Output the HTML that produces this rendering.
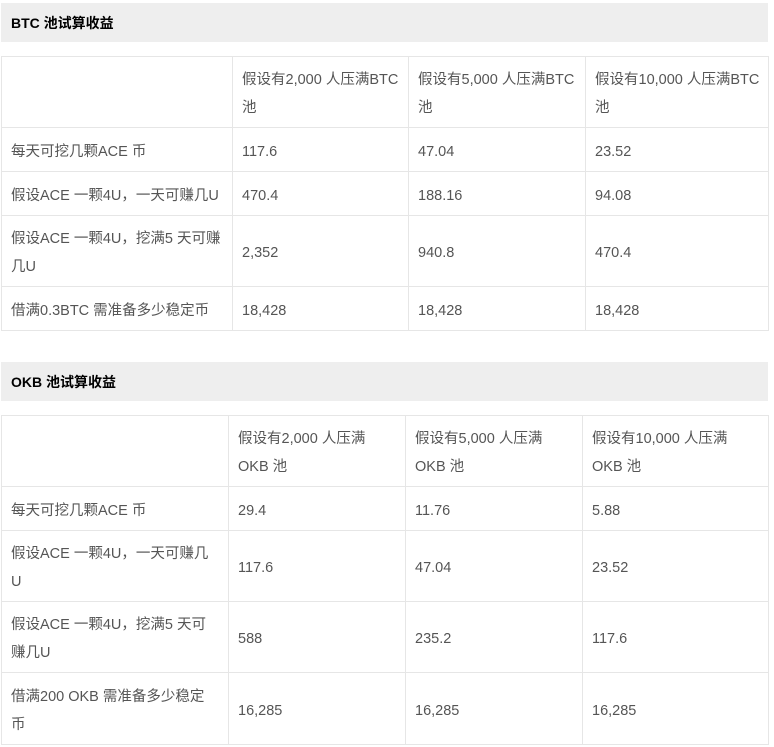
<!DOCTYPE html>
<html><head><meta charset="utf-8"><style>
body{margin:0;background:#fff;font-family:"Liberation Sans","Noto Sans CJK SC",sans-serif;}
.h{position:absolute;left:1px;width:767px;height:39px;background:#eeeeee;font-weight:bold;font-size:14px;color:#000;line-height:41px;padding-left:10px;box-sizing:border-box;}
table{position:absolute;left:1px;border-collapse:collapse;table-layout:fixed;font-size:14.5px;color:#555;}
td{border:1px solid #e6e6e6;padding:4px 9px 0;line-height:28px;vertical-align:middle;white-space:nowrap;overflow:hidden;}
</style></head><body>
<div class="h" style="top:3px">BTC 池试算收益</div>
<table style="top:56px;width:767px">
<colgroup><col style="width:231px"><col style="width:176px"><col style="width:177px"><col style="width:183px"></colgroup>
<tr style="height:71px"><td></td><td>假设有2,000 人压满BTC<br>池</td><td>假设有5,000 人压满BTC<br>池</td><td>假设有10,000 人压满BTC<br>池</td></tr>
<tr style="height:44px"><td>每天可挖几颗ACE 币</td><td>117.6</td><td>47.04</td><td>23.52</td></tr>
<tr style="height:44px"><td>假设ACE 一颗4U，一天可赚几U</td><td>470.4</td><td>188.16</td><td>94.08</td></tr>
<tr style="height:71px"><td>假设ACE 一颗4U，挖满5 天可赚<br>几U</td><td>2,352</td><td>940.8</td><td>470.4</td></tr>
<tr style="height:44px"><td>借满0.3BTC 需准备多少稳定币</td><td>18,428</td><td>18,428</td><td>18,428</td></tr>
</table>
<div class="h" style="top:362px">OKB 池试算收益</div>
<table style="top:415px;width:767px">
<colgroup><col style="width:227px"><col style="width:177px"><col style="width:177px"><col style="width:186px"></colgroup>
<tr style="height:71px"><td></td><td>假设有2,000 人压满<br>OKB 池</td><td>假设有5,000 人压满<br>OKB 池</td><td>假设有10,000 人压满<br>OKB 池</td></tr>
<tr style="height:44px"><td>每天可挖几颗ACE 币</td><td>29.4</td><td>11.76</td><td>5.88</td></tr>
<tr style="height:71px"><td>假设ACE 一颗4U，一天可赚几<br>U</td><td>117.6</td><td>47.04</td><td>23.52</td></tr>
<tr style="height:71px"><td>假设ACE 一颗4U，挖满5 天可<br>赚几U</td><td>588</td><td>235.2</td><td>117.6</td></tr>
<tr style="height:72px"><td>借满200 OKB 需准备多少稳定<br>币</td><td>16,285</td><td>16,285</td><td>16,285</td></tr>
</table>
</body></html>
